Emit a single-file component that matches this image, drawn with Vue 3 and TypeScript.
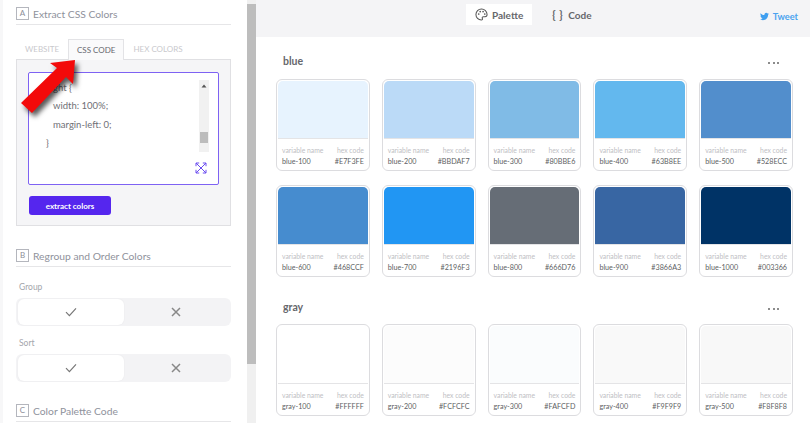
<script setup lang="ts">
// --- Palette data ---
const toSwatches = (name: string, hexes: string[], step = 100) =>
  hexes.map((hex, i) => ({ name: `${name}-${(i + 1) * step}`, hex }))

const groups = [
  {
    name: 'blue',
    swatches: toSwatches('blue', [
      '#E7F3FE', '#BBDAF7', '#80BBE6', '#63B8EE', '#528ECC',
      '#468CCF', '#2196F3', '#666D76', '#3866A3', '#003366'
    ])
  },
  {
    name: 'gray',
    swatches: toSwatches('gray', ['#FFFFFF', '#FCFCFC', '#FAFCFD', '#F9F9F9', '#F8F8F8'])
  }
]

const tabs = ['WEBSITE', 'CSS CODE', 'HEX COLORS']
const toggles = ['Group', 'Sort']
</script>

<template>
  <div class="page">
    <!-- ===== LEFT PANEL ===== -->
    <aside class="sidebar">
      <div class="section-head first">
        <span class="letter">A</span>
        <span class="section-name">Extract CSS Colors</span>
      </div>

      <div class="tabs">
        <div v-for="tab in tabs" :key="tab" class="tab" :class="{ active: tab === 'CSS CODE' }">{{ tab }}</div>
      </div>

      <div class="tab-panel">
        <div class="editor">
          <div class="code">
            <div class="indent">ght {</div>
            <div class="indent">width: 100%;</div>
            <div class="indent">margin-left: 0;</div>
            <div>}</div>
          </div>
          <div class="editor-side">
            <div class="code-scroll">
              <svg class="scroll-arrow" viewBox="0 0 6 4" width="6" height="4"><path d="M3 0.5 5.5 3.5H.5z" fill="#555" /></svg>
              <div class="code-thumb"></div>
            </div>
            <svg class="expand" viewBox="0 0 12 12" width="12" height="12" fill="none" stroke="#6a4cf0" stroke-width="1">
              <path d="M1 1 11 11M11 1 1 11" />
              <path d="M1 4.2V1h3.2M7.8 1H11v3.2M11 7.8V11H7.8M4.2 11H1V7.8" />
            </svg>
          </div>
        </div>
        <button class="extract">extract colors</button>
      </div>

      <div class="section-head">
        <span class="letter">B</span>
        <span class="section-name">Regroup and Order Colors</span>
      </div>

      <div v-for="item in toggles" :key="item" class="toggle-block">
        <div class="toggle-label">{{ item }}</div>
        <div class="toggle">
          <div class="toggle-on">
            <svg viewBox="0 0 12 10" width="12" height="10" fill="none" stroke="#777" stroke-width="1.2">
              <path d="M1 5.2 4.4 8.6 11 1.4" />
            </svg>
          </div>
          <div class="toggle-off">
            <svg viewBox="0 0 10 10" width="10" height="10" fill="none" stroke="#888" stroke-width="1.5">
              <path d="M1 1 9 9M9 1 1 9" />
            </svg>
          </div>
        </div>
      </div>

      <div class="section-head last">
        <span class="letter">C</span>
        <span class="section-name">Color Palette Code</span>
      </div>

      <!-- red arrow pasted over the screenshot -->
      <svg class="red-arrow" viewBox="0 0 60 60" width="60" height="60">
        <polygon points="57,2 55,26 48,19 14,55 3,45 39,10 32,5" fill="#f30a0a" />
      </svg>
    </aside>

    <div class="page-scroll"><div class="page-thumb"></div></div>

    <!-- ===== RIGHT SIDE ===== -->
    <main class="main">
      <header class="topbar">
        <div class="view-switch">
          <div class="view-btn selected">
            <svg viewBox="0 0 14 14" width="13" height="13" fill="none" stroke="#555" stroke-width="1.1">
              <path d="M7 1C3.600 1 1 3.700 1 7s2.600 6 5.800 6c1.200 0 1.500-.8 1.100-1.600-.5-1 .1-2 1.200-2h1.700C12.200 9.400 13 8.400 13 7c0-3.400-2.700-6-6-6z" />
              <circle cx="4" cy="6.500" r=".9" fill="#555" stroke="none" />
              <circle cx="5.600" cy="3.900" r=".9" fill="#555" stroke="none" />
              <circle cx="8.700" cy="3.900" r=".9" fill="#555" stroke="none" />
              <circle cx="10.500" cy="6.500" r=".9" fill="#555" stroke="none" />
            </svg>
            <span>Palette</span>
          </div>
          <div class="view-btn">
            <span class="braces">{ }</span>
            <span>Code</span>
          </div>
        </div>
        <div class="tweet">
          <svg viewBox="0 0 24 24" width="9" height="9" fill="#3f9ff0">
            <path d="M23.950 4.570a10 10 0 0 1-2.820.77 4.960 4.960 0 0 0 2.160-2.720 9.900 9.900 0 0 1-3.120 1.180 4.920 4.920 0 0 0-8.380 4.480C7.690 8.100 4.070 6.130 1.640 3.160a4.820 4.820 0 0 0-.66 2.470c0 1.710.87 3.210 2.190 4.100a4.900 4.900 0 0 1-2.230-.62v.06a4.920 4.920 0 0 0 3.950 4.830 5 5 0 0 1-2.210.08 4.940 4.940 0 0 0 4.600 3.420A9.870 9.870 0 0 1 0 19.540a14 14 0 0 0 7.560 2.210c9.050 0 14-7.500 14-13.980 0-.21 0-.42-.02-.63a9.940 9.940 0 0 0 2.460-2.550z" />
          </svg>
          <span>Tweet</span>
        </div>
      </header>

      <div class="palette">
        <section v-for="group in groups" :key="group.name" class="group">
          <div class="group-head">
            <span class="group-name">{{ group.name }}</span>
            <span class="dots"><i></i><i></i><i></i></span>
          </div>
          <div class="swatch-grid">
            <div v-for="s in group.swatches" :key="s.name" class="card">
              <div class="swatch" :style="{ backgroundColor: s.hex }"></div>
              <div class="meta">
                <div class="meta-row caption"><span>variable name</span><span>hex code</span></div>
                <div class="meta-row value"><span>{{ s.name }}</span><span>{{ s.hex }}</span></div>
              </div>
            </div>
          </div>
        </section>
      </div>
    </main>
  </div>
</template>

<style scoped>
.page {
  display: flex;
  width: 810px;
  height: 423px;
  overflow: hidden;
  background: #f7f7f8;
  font-family: Lato, 'Open Sans', sans-serif;
  color: #555;
}

/* --- Left panel --- */
.sidebar {
  position: relative;
  width: 244px;
  margin-left: 3px;
  padding: 0 16px 0 13px;
  box-sizing: border-box;
  flex-shrink: 0;
  background: #fff;
  overflow: hidden;
}

.section-head {
  display: flex;
  align-items: center;
  gap: 4px;
  height: 17px;
  margin-top: 21px;
  padding-bottom: 2px;
  border-bottom: 1px solid #e6e6e8;
}

.section-head.first {
  margin-top: 5px;
}

.section-head.last {
  margin-top: 20px;
}

.letter {
  width: 11px;
  height: 11px;
  border: 1px solid #b4b6bd;
  font-size: 8px;
  line-height: 11px;
  text-align: center;
  color: #8b8e98;
}

.section-name {
  font-size: 10.300px;
  color: #8f929c;
}

.tabs {
  display: flex;
  margin-top: 14px;
  height: 21px;
  position: relative;
  z-index: 1;
}

.tab {
  padding: 0 9px;
  font-size: 8px;
  line-height: 21px;
  color: #c9c9cd;
}

.tab.active {
  padding: 0 8px;
  color: #66686f;
  background: #fafafb;
  border: 1px solid #e3e3e6;
  border-bottom: none;
}

.tab-panel {
  height: 167px;
  box-sizing: border-box;
  padding: 12px 11px 0;
  background: #f5f5f7;
  border: 1px solid #e0e0e3;
  margin-top: -1px;
}

.editor {
  display: flex;
  justify-content: space-between;
  height: 113px;
  box-sizing: border-box;
  padding: 7px 8px 10px 17px;
  background: #fff;
  border: 1px solid #7e62f3;
  border-radius: 2px;
}

.code {
  margin-top: -1px;
  font-size: 9.500px;
  line-height: 18.300px;
  color: #6f7076;
}

.indent {
  padding-left: 7px;
}

.editor-side {
  display: flex;
  flex-direction: column;
  align-items: center;
  width: 12px;
}

.code-scroll {
  position: relative;
  width: 10px;
  height: 72px;
  background: #f1f1f1;
  display: flex;
  justify-content: center;
  padding-top: 4px;
  box-sizing: border-box;
}

.scroll-arrow {
  display: block;
}

.code-thumb {
  position: absolute;
  left: 1px;
  top: 52px;
  width: 8px;
  height: 11px;
  background: #bcbcbc;
}

.expand {
  margin-top: 10px;
  margin-right: 6px;
  flex-shrink: 0;
}

.extract {
  display: block;
  width: 82px;
  height: 19px;
  margin: 11px 0 0 1px;
  padding: 0;
  border: none;
  border-radius: 3px;
  background: #5526ee;
  color: #fff;
  font-family: inherit;
  font-size: 8px;
  font-weight: 700;
}

.toggle-block {
  margin-top: 13px;
}

.toggle-block + .toggle-block {
  margin-top: 10px;
}

.toggle-label {
  padding-left: 3px;
  height: 18px;
  font-size: 8.500px;
  line-height: 14px;
  color: #a4a6ac;
}

.toggle {
  display: flex;
  height: 28px;
  padding: 1px 2px;
  box-sizing: border-box;
  border-radius: 6px;
  background: #f3f3f5;
}

.toggle-on,
.toggle-off {
  display: flex;
  align-items: center;
  justify-content: center;
  flex: 1;
}

.toggle-on {
  background: #fff;
  border-radius: 6px;
  box-shadow: 0 0 2px rgba(0, 0, 0, 0.06);
}

.red-arrow {
  position: absolute;
  left: 15px;
  top: 58px;
  filter: drop-shadow(3px 4px 2.500px rgba(0, 0, 0, 0.65));
}

/* --- Window scrollbar --- */
.page-scroll {
  width: 9px;
  flex-shrink: 0;
  background: #f0f0f0;
}

.page-thumb {
  height: 360px;
  margin-top: 4px;
  background: #bdbdbd;
}

/* --- Right side --- */
.main {
  flex: 1;
  min-width: 0;
  background: #fff;
}

.topbar {
  display: flex;
  align-items: flex-start;
  justify-content: flex-end;
  position: relative;
  height: 37px;
  box-sizing: border-box;
  padding: 4px 12px 0 0;
  background: #f4f4f6;
}

.view-switch {
  position: absolute;
  left: 210px;
  top: 4px;
  display: flex;
  gap: 10px;
}

.view-btn {
  display: flex;
  align-items: center;
  gap: 4px;
  height: 21px;
  padding: 0 9px;
  font-size: 10px;
  font-weight: 700;
  color: #66676c;
}

.view-btn.selected {
  background: #fff;
}

.braces {
  width: 13px;
  font-size: 11px;
  letter-spacing: 0.5px;
  text-align: center;
  white-space: nowrap;
}

.tweet {
  display: flex;
  align-items: center;
  gap: 4px;
  height: 24px;
  font-size: 9.200px;
  font-weight: 700;
  color: #4aa3ef;
}

.palette {
  padding: 0 17px 0 20px;
}

.group-head {
  display: flex;
  align-items: center;
  justify-content: space-between;
  height: 42px;
  box-sizing: border-box;
  padding: 6px 14px 0 7px;
}

.group + .group .group-head {
  height: 47px;
  padding-top: 13px;
}

.group-name {
  font-size: 10.500px;
  font-weight: 700;
  color: #66676c;
}

.dots {
  display: flex;
  gap: 2.500px;
  margin-top: 3px;
}

.dots i {
  width: 2px;
  height: 2px;
  border-radius: 50%;
  background: #666;
}

.swatch-grid {
  display: grid;
  grid-template-columns: repeat(5, 1fr);
  gap: 14px 12px;
}

.card {
  height: 92px;
  box-sizing: border-box;
  padding: 1px;
  border: 1px solid #dcdcdf;
  border-radius: 6px;
  background: #fff;
}

.swatch {
  height: 57px;
  border-bottom: 1px solid #e4e4e6;
  border-radius: 5px 5px 0 0;
}

.meta {
  padding: 5.500px 4px 0;
}

.meta-row {
  display: flex;
  justify-content: space-between;
  white-space: nowrap;
}

.caption {
  height: 11px;
  font-size: 6.800px;
  line-height: 11px;
  color: #c0c0c4;
}

.value {
  height: 11px;
  font-size: 7.200px;
  line-height: 11px;
  color: #5e5f64;
}
</style>
